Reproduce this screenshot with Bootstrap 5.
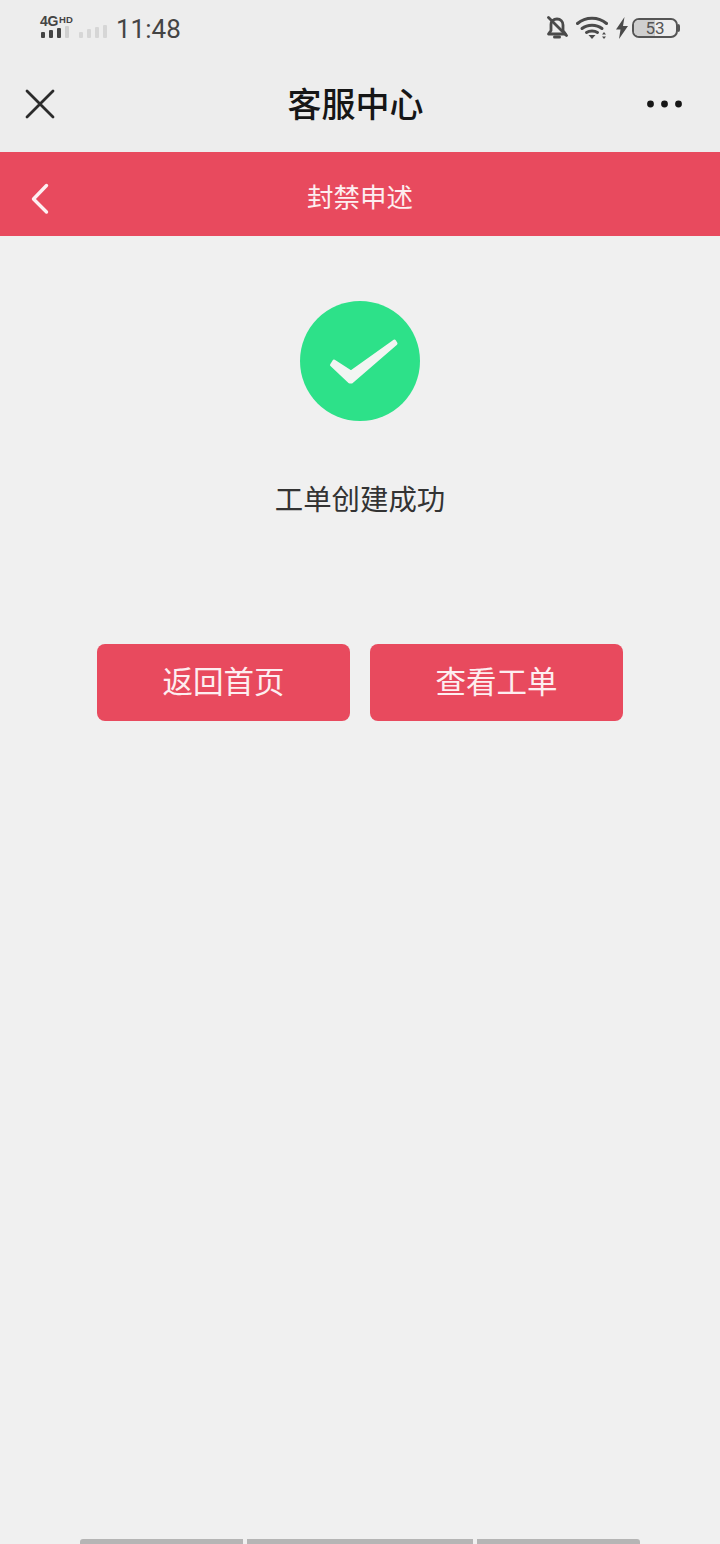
<!DOCTYPE html>
<html lang="zh">
<head>
<meta charset="utf-8">
<title>客服中心</title>
<link href="https://cdn.jsdelivr.net/npm/bootstrap@5.3.0/dist/css/bootstrap.min.css" rel="stylesheet">
<style>
html,body{height:1544px;overflow:hidden}
body{background:#f0f0f0;font-family:"Noto Sans CJK SC","Liberation Sans",sans-serif;color:#2b2b2b}
.page-shell{width:720px;height:1544px}
.top-zone{background:#ededed;height:152px}
.status-row{height:56px;padding:0 40px}
.sig-block{width:31px;margin-top:13px}
.sig-label{font:700 14px/13px "Liberation Sans",sans-serif;color:#444;letter-spacing:-.4px;height:13px;white-space:nowrap}
.sig-label span{font-size:9.500px;vertical-align:3px;letter-spacing:.2px;margin-left:1px}
.sig-grey{margin-top:25px;margin-left:8px}
.clock{font:400 26px/1 "Roboto","Liberation Sans",sans-serif;color:#444;margin-left:6px;padding-top:1px}
.title-row{height:96px;padding:0 38px 0 25px}
.title-text{font-size:34px;font-weight:500;color:#161616;line-height:1;position:absolute;left:-9px;right:0;top:-1px;text-align:center}
.title-wrap{position:relative;height:96px}
.red-band{background:#e84a5e;height:84px;color:#fff;position:relative}
.band-title{font-size:26.500px;line-height:1;color:#fdeef0;padding-top:4px}
.band-back{position:absolute;left:28px;top:30px}
.done-circle{width:120px;height:120px;background:#2de189;margin-top:65px}
.done-text{font-size:28.400px;line-height:28px;margin-top:63px;color:#333}
.btn-row{margin-top:132px;gap:20px}
.act-btn{width:253px;height:77px;background:#e84a5e;border:0;border-radius:8px;color:#fdeef0;font-size:30.500px;line-height:1;padding:0 0 4px}
.act-btn:hover{background:#e84a5e;color:#fdeef0}
.tab-strip{height:5px;margin:0 80px;gap:4px}
.tab-strip div{background:#b5b5b5;height:5px}
.tab-strip div:first-child{border-top-left-radius:3px}
.tab-strip div:last-child{border-top-right-radius:3px}
.batt{width:46px;height:20px;border:2px solid #555;border-radius:7px;position:relative;overflow:hidden;font:400 17px/16px "Roboto","Liberation Sans",sans-serif;color:#555;text-align:center}
.batt-fill{position:absolute;left:0;top:0;bottom:0;width:50%;background:#cfcfcf}
.batt-num{position:relative}
.batt-cap{width:2px;height:8px;background:#555;border-radius:0 2px 2px 0}
.status-icons{gap:7px}
.wifi-gap{margin-left:1px}
.bolt-gap{margin-left:1px}
.batt-wrap{margin-left:-3px}
</style>
</head>
<body>
<div class="page-shell d-flex flex-column">
  <div class="top-zone">
    <div class="status-row d-flex align-items-center">
      <div class="sig-block align-self-start">
        <div class="sig-label">4G<span>HD</span></div>
        <svg width="31" height="12" viewBox="0 0 31 12" class="d-block" fill="#444"><rect x="1" y="6" width="4" height="6" rx="1"/><rect x="9" y="4" width="4" height="8" rx="1"/><rect x="17" y="2" width="4" height="10" rx="1"/><rect x="25" y="0" width="4" height="12" rx="1" fill="#d0d0d0"/></svg>
      </div>
      <svg width="31" height="13" viewBox="0 0 31 13" class="sig-grey align-self-start" fill="#d6d6d6"><rect x="0" y="7" width="4" height="6" rx="1"/><rect x="8" y="4" width="4" height="9" rx="1"/><rect x="16" y="2" width="4" height="11" rx="1"/><rect x="24" y="0" width="4" height="13" rx="1"/></svg>
      <div class="clock">11:48</div>
      <div class="ms-auto d-flex align-items-center status-icons">
        <svg width="22" height="24" viewBox="0 0 22 24" fill="none" stroke="#4a4a4a" stroke-width="2.800" stroke-linecap="round" stroke-linejoin="round"><path d="M5 8.500C5 5 7.500 3 11 3s6 2.500 6 6v5.500l2.500 3.500h-17L5 14.500z"/><path d="M8.500 21h5" stroke-width="3"/><path d="M2.500 1.500l18 18"/></svg>
        <svg class="wifi-gap" width="32" height="24" viewBox="0 0 32 24" fill="none" stroke="#4a4a4a" stroke-width="3" stroke-linecap="round"><path d="M1.500 7.500c8-7 21-7 29 0"/><path d="M6 12.500c5.500-4.500 14.500-4.500 20 0"/><path d="M10.500 16.500c3-2 8-2 11 0"/><path d="M12.500 19h7l-3.500 4z" fill="#4a4a4a" stroke="none"/><path d="M26 18.500l2-2.500 2 2.500zM26 20.500l2 2.500 2-2.500z" fill="#4a4a4a" stroke="none"/></svg>
        <svg class="bolt-gap" width="12" height="22" viewBox="0 0 12 22" fill="#4a4a4a"><path d="M8.500 0L0 12.500h4.500L3 22l9-13H7z"/></svg>
        <div class="d-flex align-items-center batt-wrap">
          <div class="batt"><div class="batt-fill"></div><span class="batt-num">53</span></div>
          <div class="batt-cap"></div>
        </div>
      </div>
    </div>
    <div class="title-wrap">
      <div class="title-text d-flex align-items-center justify-content-center h-100">客服中心</div>
      <div class="title-row d-flex align-items-center justify-content-between h-100">
        <svg width="30" height="30" viewBox="0 0 30 30" stroke="#2b2b2b" stroke-width="2.800" stroke-linecap="round"><path d="M2 2l26 26M28 2L2 28"/></svg>
        <svg width="35" height="8" viewBox="0 0 35 8" fill="#161616"><circle cx="3.500" cy="4" r="3.400"/><circle cx="17.500" cy="4" r="3.400"/><circle cx="31.500" cy="4" r="3.400"/></svg>
      </div>
    </div>
  </div>
  <div class="red-band d-flex align-items-center justify-content-center">
    <svg class="band-back" width="22" height="34" viewBox="0 0 22 34" fill="none" stroke="#fdf0f2" stroke-width="3.400" stroke-linecap="round" stroke-linejoin="round"><path d="M18.500 3.500L5.500 17l13 13"/></svg>
    <div class="band-title">封禁申述</div>
  </div>
  <div class="d-flex flex-column align-items-center flex-grow-1">
    <div class="done-circle rounded-circle">
      <svg class="d-block" width="120" height="120" viewBox="0 0 120 120"><path d="M31.500 64l2.500-4 17 11 43.500-31 1.500 2.500-44.500 38.500-2 0z" fill="#f2f5f2" stroke="#f2f5f2" stroke-width="3" stroke-linejoin="round"/></svg>
    </div>
    <div class="done-text">工单创建成功</div>
    <div class="btn-row d-flex">
      <button class="btn act-btn" type="button">返回首页</button>
      <button class="btn act-btn" type="button">查看工单</button>
    </div>
  </div>
  <div class="tab-strip d-flex">
    <div style="width:163px"></div>
    <div style="width:226px"></div>
    <div style="width:163px"></div>
  </div>
</div>
<script src="https://cdn.jsdelivr.net/npm/bootstrap@5.3.0/dist/js/bootstrap.bundle.min.js"></script>
</body>
</html>
